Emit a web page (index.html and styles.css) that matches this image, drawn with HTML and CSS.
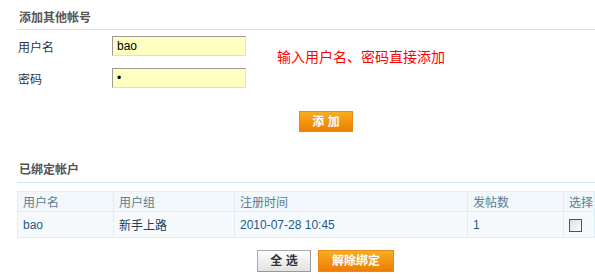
FILE: index.html
```html
<!DOCTYPE html>
<html lang="zh-CN">
<head>
<meta charset="utf-8">
<title>帐号绑定</title>
<link rel="stylesheet" href="styles.css">
</head>
<body>
<div class="page">
  <h2 class="sec-title first">添加其他帐号</h2>
  <div class="form-area">
    <div class="rows">
      <div class="row"><label class="lbl">用户名</label><input class="inp" type="text" value="bao"></div>
      <div class="row"><label class="lbl">密码</label><input class="inp" type="password" value="a"></div>
    </div>
    <div class="hint">输入用户名、密码直接添加</div>
  </div>
  <div class="add-row"><button class="btn btn-orange btn-add">添 加</button></div>

  <h2 class="sec-title second">已绑定帐户</h2>
  <table class="tbl">
    <thead>
      <tr><th class="c1">用户名</th><th class="c2">用户组</th><th class="c3">注册时间</th><th class="c4">发帖数</th><th class="c5">选择</th></tr>
    </thead>
    <tbody>
      <tr><td>bao</td><td class="grp">新手上路</td><td>2010-07-28 10:45</td><td>1</td><td><span class="chk"></span></td></tr>
    </tbody>
  </table>
  <div class="act-row">
    <button class="btn btn-gray">全 选</button>
    <button class="btn btn-orange btn-unbind">解除绑定</button>
  </div>
</div>
</body>
</html>
```
FILE: styles.css
```css
* { box-sizing: border-box; }
body {
  margin: 0;
  background: #fff;
  font-family: "Liberation Sans", "Noto Sans CJK SC", sans-serif;
  font-size: 12px;
  color: #333;
}
.page { padding-left: 17px; }
.sec-title {
  margin: 0;
  font-size: 12px;
  font-weight: bold;
  color: #555;
  line-height: 16px;
  padding-left: 2px;
  border-bottom: 1px solid #cfe2ee;
}
.sec-title.first { padding-top: 10px; padding-bottom: 3px; }
.sec-title.second { margin-top: 30px; padding-bottom: 4px; }
.form-area { display: flex; align-items: center; }
.rows { padding-top: 6px; }
.row { display: flex; align-items: center; height: 20px; margin-bottom: 12px; }
.row:last-child { margin-bottom: 0; }
.lbl { width: 95px; padding-left: 1px; color: #333; }
.inp {
  width: 134px;
  height: 20px;
  margin: 0;
  padding: 0 4px;
  border: 1px solid #ddd;
  border-top-color: #999;
  border-left-color: #999;
  background: #ffffc0;
  font-family: "Liberation Sans", sans-serif;
  font-size: 12px;
  color: #000;
  outline: none;
}
.hint { margin-left: 31px; margin-top: -4px; color: #f00; font-size: 14px; line-height: 16px; }
.add-row { padding-left: 282px; padding-top: 23px; }
.btn {
  height: 22px;
  padding: 0;
  margin: 0;
  font-family: "Liberation Sans", "Noto Sans CJK SC", sans-serif;
  font-size: 12px;
  font-weight: bold;
  line-height: 20px;
  cursor: pointer;
}
.btn-orange {
  color: #fff;
  border: 1px solid #e98a14;
  background: linear-gradient(#f8ad1f, #ee7d03);
}
.btn-add { width: 54px; height: 21px; }
.btn-gray {
  color: #333;
  border: 1px solid #aaa;
  border-right-color: #999;
  border-bottom-color: #999;
  background: linear-gradient(#fdfdfd, #e2e2e2);
  width: 54px;
}
.btn-unbind { width: 76px; margin-left: 7px; }
.tbl {
  margin-top: 8px;
  width: 578px;
  border-collapse: collapse;
  table-layout: fixed;
}
.tbl th, .tbl td {
  text-align: left;
  font-weight: normal;
  padding: 0 0 0 5px;
  border: 1px solid #e1edf4;
  white-space: nowrap;
}
.tbl th { height: 20px; background: #f1f7fb; color: #5c7d8f; }
.tbl td { height: 26px; background: #f6fafd; color: #1d5a8a; }
.tbl td.grp { color: #2b4050; }
.c1 { width: 96px; }
.c2 { width: 121px; }
.c3 { width: 233px; }
.c4 { width: 96px; }
.chk {
  display: inline-block;
  width: 13px;
  height: 13px;
  margin-top: 4px;
  border: 1px solid #2a5c85;
  background: linear-gradient(135deg, #dcdcdc, #fff);
}
.act-row { padding-left: 240px; padding-top: 12px; display: flex; }
```
